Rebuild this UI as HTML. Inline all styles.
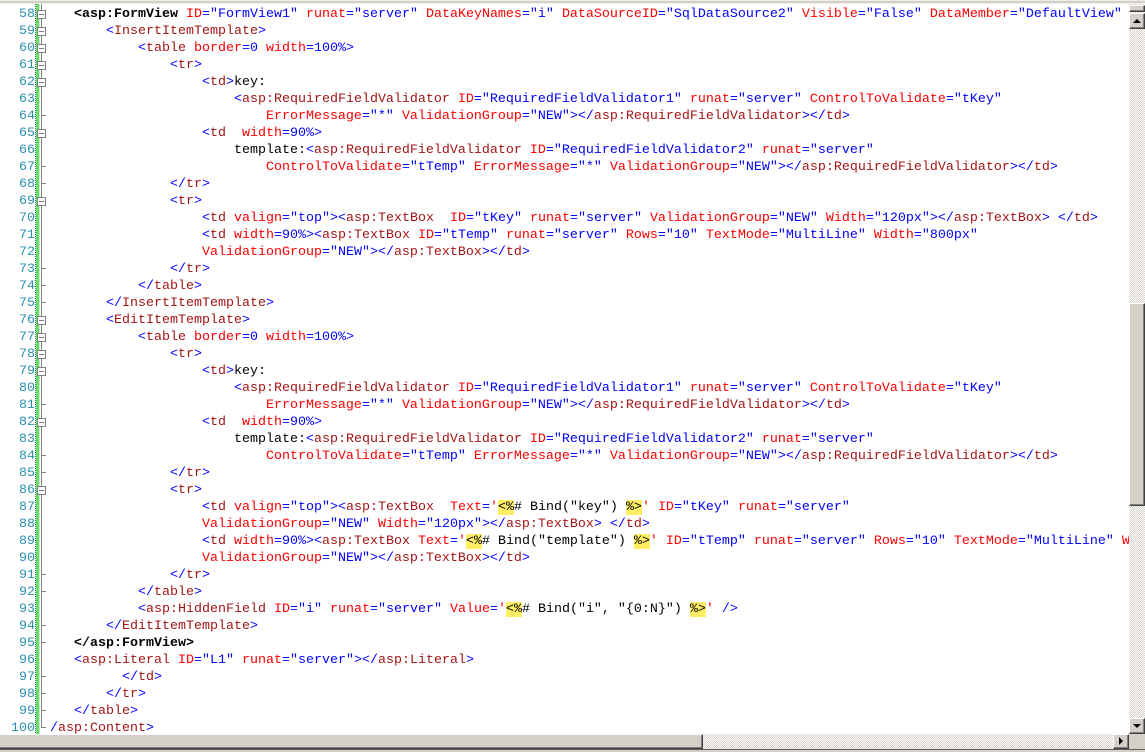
<!DOCTYPE html>
<html><head><meta charset="utf-8">
<style>
html,body{margin:0;padding:0;width:1145px;height:752px;overflow:hidden;background:#fff}
#ln,#code{position:absolute;margin:0;font:13.333px/17px "Liberation Mono",monospace;white-space:pre}
#ln{left:0;top:6px;width:35px;text-align:right;color:#2b91af;height:728px;overflow:hidden}
#code{left:42px;top:6px;width:1087px;height:728px;overflow:hidden;color:#00f}
.m{color:#a31515}.r{color:#f00}.t{color:#000}.k{color:#000;font-weight:bold}.y{background:#ffee62;color:#000}
.bar{position:absolute;background:#d4d0c8}
.btn{position:absolute;box-sizing:border-box;background:#d4d0c8;border:1px solid;border-color:#fff #404040 #404040 #fff;box-shadow:inset -1px -1px 0 #808080,inset 1px 1px 0 #d4d0c8}
.dither{position:absolute;background:conic-gradient(#fff 25%,#d4d0c8 0 50%,#fff 0 75%,#d4d0c8 0) 0 0/2px 2px}
svg{position:absolute;left:0;top:0}
</style></head><body>
<div class="bar" style="left:0;top:0;width:1145px;height:1px;background:#eeece6"></div>
<div class="bar" style="left:0;top:1px;width:1145px;height:2px;background:#d4d0c8"></div>
<div class="bar" style="left:0;top:3px;width:1145px;height:1px;background:#f0eee8"></div>
<svg width="60" height="734" viewBox="0 0 60 734">
<rect x="36" y="4" width="3.4" height="730" fill="#6cdb6c"/>
<path d="M35.5 4V734" stroke="#1f7f55" stroke-dasharray="1 1" fill="none"/>
<path d="M41.5 4V727.5H46M42 115.5h4M42 166.5h4M42 183.5h4M42 268.5h4M42 285.5h4M42 302.5h4M42 404.5h4M42 455.5h4M42 472.5h4M42 574.5h4M42 591.5h4M42 625.5h4M42 642.5h4M42 676.5h4M42 693.5h4M42 710.5h4" stroke="#808080" fill="none"/>
<g fill="#fff" stroke="#808080">
<rect x="37.5" y="10.5" width="8" height="8"/><rect x="37.5" y="27.5" width="8" height="8"/><rect x="37.5" y="44.5" width="8" height="8"/><rect x="37.5" y="61.5" width="8" height="8"/><rect x="37.5" y="78.5" width="8" height="8"/><rect x="37.5" y="129.5" width="8" height="8"/><rect x="37.5" y="197.5" width="8" height="8"/><rect x="37.5" y="316.5" width="8" height="8"/><rect x="37.5" y="333.5" width="8" height="8"/><rect x="37.5" y="350.5" width="8" height="8"/><rect x="37.5" y="367.5" width="8" height="8"/><rect x="37.5" y="418.5" width="8" height="8"/><rect x="37.5" y="486.5" width="8" height="8"/>
</g>
<path d="M39 14.5h5M39 31.5h5M39 48.5h5M39 65.5h5M39 82.5h5M39 133.5h5M39 201.5h5M39 320.5h5M39 337.5h5M39 354.5h5M39 371.5h5M39 422.5h5M39 490.5h5" stroke="#808080" fill="none"/>
</svg>
<pre id="ln">58
59
60
61
62
63
64
65
66
67
68
69
70
71
72
73
74
75
76
77
78
79
80
81
82
83
84
85
86
87
88
89
90
91
92
93
94
95
96
97
98
99
100</pre>
<pre id="code">    <span class="k">&lt;asp:FormView</span> <span class="r">ID</span>="FormView1" <span class="r">runat</span>="server" <span class="r">DataKeyNames</span>="i" <span class="r">DataSourceID</span>="SqlDataSource2" <span class="r">Visible</span>="False" <span class="r">DataMember</span>="DefaultView"
        &lt;<span class="m">InsertItemTemplate</span>&gt;
            &lt;<span class="m">table</span> <span class="r">border</span>=0 <span class="r">width</span>=100%&gt;
                &lt;<span class="m">tr</span>&gt;
                    &lt;<span class="m">td</span>&gt;<span class="t">key:</span>
                        &lt;<span class="m">asp:RequiredFieldValidator</span> <span class="r">ID</span>="RequiredFieldValidator1" <span class="r">runat</span>="server" <span class="r">ControlToValidate</span>="tKey"
                            <span class="r">ErrorMessage</span>="*" <span class="r">ValidationGroup</span>="NEW"&gt;&lt;/<span class="m">asp:RequiredFieldValidator</span>&gt;&lt;/<span class="m">td</span>&gt;
                    &lt;<span class="m">td</span>  <span class="r">width</span>=90%&gt;
                        <span class="t">template:</span>&lt;<span class="m">asp:RequiredFieldValidator</span> <span class="r">ID</span>="RequiredFieldValidator2" <span class="r">runat</span>="server"
                            <span class="r">ControlToValidate</span>="tTemp" <span class="r">ErrorMessage</span>="*" <span class="r">ValidationGroup</span>="NEW"&gt;&lt;/<span class="m">asp:RequiredFieldValidator</span>&gt;&lt;/<span class="m">td</span>&gt;
                &lt;/<span class="m">tr</span>&gt;
                &lt;<span class="m">tr</span>&gt;
                    &lt;<span class="m">td</span> <span class="r">valign</span>="top"&gt;&lt;<span class="m">asp:TextBox</span>  <span class="r">ID</span>="tKey" <span class="r">runat</span>="server" <span class="r">ValidationGroup</span>="NEW" <span class="r">Width</span>="120px"&gt;&lt;/<span class="m">asp:TextBox</span>&gt; &lt;/<span class="m">td</span>&gt;
                    &lt;<span class="m">td</span> <span class="r">width</span>=90%&gt;&lt;<span class="m">asp:TextBox</span> <span class="r">ID</span>="tTemp" <span class="r">runat</span>="server" <span class="r">Rows</span>="10" <span class="r">TextMode</span>="MultiLine" <span class="r">Width</span>="800px"
                    <span class="r">ValidationGroup</span>="NEW"&gt;&lt;/<span class="m">asp:TextBox</span>&gt;&lt;/<span class="m">td</span>&gt;
                &lt;/<span class="m">tr</span>&gt;
            &lt;/<span class="m">table</span>&gt;
        &lt;/<span class="m">InsertItemTemplate</span>&gt;
        &lt;<span class="m">EditItemTemplate</span>&gt;
            &lt;<span class="m">table</span> <span class="r">border</span>=0 <span class="r">width</span>=100%&gt;
                &lt;<span class="m">tr</span>&gt;
                    &lt;<span class="m">td</span>&gt;<span class="t">key:</span>
                        &lt;<span class="m">asp:RequiredFieldValidator</span> <span class="r">ID</span>="RequiredFieldValidator1" <span class="r">runat</span>="server" <span class="r">ControlToValidate</span>="tKey"
                            <span class="r">ErrorMessage</span>="*" <span class="r">ValidationGroup</span>="NEW"&gt;&lt;/<span class="m">asp:RequiredFieldValidator</span>&gt;&lt;/<span class="m">td</span>&gt;
                    &lt;<span class="m">td</span>  <span class="r">width</span>=90%&gt;
                        <span class="t">template:</span>&lt;<span class="m">asp:RequiredFieldValidator</span> <span class="r">ID</span>="RequiredFieldValidator2" <span class="r">runat</span>="server"
                            <span class="r">ControlToValidate</span>="tTemp" <span class="r">ErrorMessage</span>="*" <span class="r">ValidationGroup</span>="NEW"&gt;&lt;/<span class="m">asp:RequiredFieldValidator</span>&gt;&lt;/<span class="m">td</span>&gt;
                &lt;/<span class="m">tr</span>&gt;
                &lt;<span class="m">tr</span>&gt;
                    &lt;<span class="m">td</span> <span class="r">valign</span>="top"&gt;&lt;<span class="m">asp:TextBox</span>  <span class="r">Text</span>=<span class="r">'</span><span class="y">&lt;%</span><span class="t"># Bind("key") </span><span class="y">%&gt;</span><span class="r">'</span> <span class="r">ID</span>="tKey" <span class="r">runat</span>="server"
                    <span class="r">ValidationGroup</span>="NEW" <span class="r">Width</span>="120px"&gt;&lt;/<span class="m">asp:TextBox</span>&gt; &lt;/<span class="m">td</span>&gt;
                    &lt;<span class="m">td</span> <span class="r">width</span>=90%&gt;&lt;<span class="m">asp:TextBox</span> <span class="r">Text</span>=<span class="r">'</span><span class="y">&lt;%</span><span class="t"># Bind("template") </span><span class="y">%&gt;</span><span class="r">'</span> <span class="r">ID</span>="tTemp" <span class="r">runat</span>="server" <span class="r">Rows</span>="10" <span class="r">TextMode</span>="MultiLine" <span class="r">Width</span>="800px"
                    <span class="r">ValidationGroup</span>="NEW"&gt;&lt;/<span class="m">asp:TextBox</span>&gt;&lt;/<span class="m">td</span>&gt;
                &lt;/<span class="m">tr</span>&gt;
            &lt;/<span class="m">table</span>&gt;
            &lt;<span class="m">asp:HiddenField</span> <span class="r">ID</span>="i" <span class="r">runat</span>="server" <span class="r">Value</span>=<span class="r">'</span><span class="y">&lt;%</span><span class="t"># Bind("i", "{0:N}") </span><span class="y">%&gt;</span><span class="r">'</span> /&gt;
        &lt;/<span class="m">EditItemTemplate</span>&gt;
    <span class="k">&lt;/asp:FormView&gt;</span>
    &lt;<span class="m">asp:Literal</span> <span class="r">ID</span>="L1" <span class="r">runat</span>="server"&gt;&lt;/<span class="m">asp:Literal</span>&gt;
          &lt;/<span class="m">td</span>&gt;
        &lt;/<span class="m">tr</span>&gt;
    &lt;/<span class="m">table</span>&gt;
 /<span class="m">asp:Content</span>&gt;</pre>
<!-- vertical scrollbar -->
<div class="dither" style="left:1129px;top:4px;width:16px;height:730px"></div>
<div class="btn" style="left:1129px;top:5px;width:16px;height:7px"></div>
<div class="btn" style="left:1129px;top:13px;width:16px;height:16px"></div>
<svg style="left:1129px;top:13px" width="16" height="16"><path d="M8 6l4 4H4z" fill="#000"/></svg>
<div class="btn" style="left:1129px;top:303px;width:16px;height:203px"></div>
<div class="btn" style="left:1129px;top:718px;width:16px;height:16px"></div>
<svg style="left:1129px;top:718px" width="16" height="16"><path d="M4 6h8l-4 4z" fill="#000"/></svg>
<!-- bottom -->
<div class="bar" style="left:0;top:734px;width:1145px;height:15px"></div>
<div class="btn" style="left:0;top:734px;width:703px;height:15px;border-left:0"></div>
<div class="dither" style="left:703px;top:734px;width:410px;height:15px"></div>
<div class="btn" style="left:1113px;top:734px;width:16px;height:15px"></div>
<svg style="left:1113px;top:734px" width="16" height="15"><path d="M6 3l4 4-4 4z" fill="#000"/></svg>
<div class="bar" style="left:0;top:749px;width:1145px;height:1px;background:#606060"></div>
<div class="bar" style="left:0;top:750px;width:1145px;height:2px;background:#d4d0c8"></div>
</body></html>
